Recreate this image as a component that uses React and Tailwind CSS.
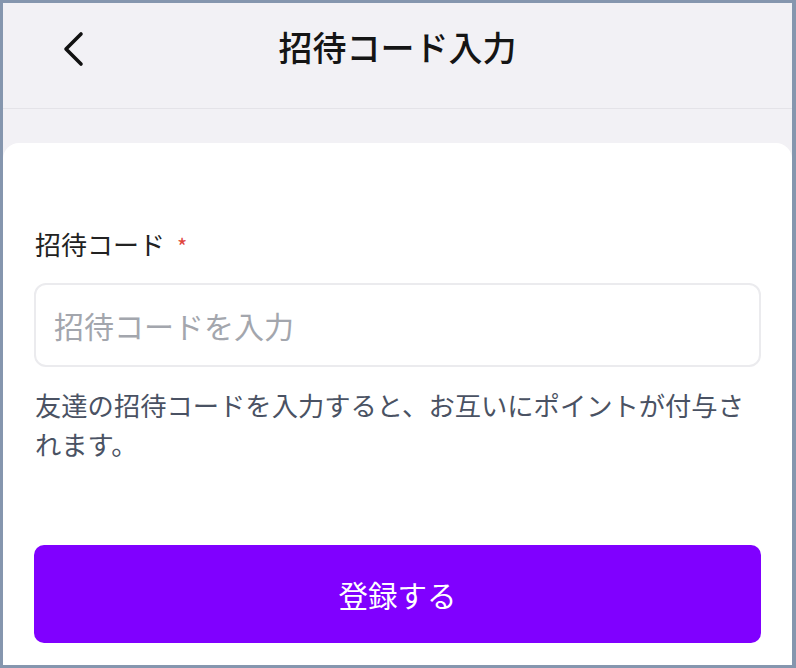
export default function App() {
  const font = { fontFamily: '"Noto Sans CJK JP", "Noto Sans", sans-serif' };
  return (
    <div
      className="w-[796px] h-[668px] border-l-[3px] border-t-[3px] border-r-4 border-b-[3px] border-[#8596ae] bg-[#f2f1f5] flex flex-col overflow-hidden"
      style={font}
    >
      <header className="h-[106px] shrink-0 border-b border-[#e4e3e8]">
        <div className="h-[86px] relative flex items-center justify-center">
          <button className="absolute left-[56px] top-[26px] w-[30px] h-[40px] flex items-center justify-center">
            <svg width="24" height="36" viewBox="0 0 24 36" fill="none">
              <polyline
                points="19,3 4,18 19,33"
                stroke="#111"
                strokeWidth="3.6"
                strokeLinecap="round"
                strokeLinejoin="round"
              />
            </svg>
          </button>
          <h1 className="text-[34px] font-medium text-[#151515]">招待コード入力</h1>
        </div>
      </header>

      <main className="mt-[34px] flex-1 bg-white rounded-t-[16px] px-[31px] pt-[83px]">
        <label className="block text-[26px] leading-[36px] text-[#222] pl-[1px]">
          招待コード<span className="text-[#e0453c] ml-[12px] text-[22px]">*</span>
        </label>
        <input
          className="mt-[20px] w-full h-[84px] rounded-[12px] border-2 border-[#ebebee] px-[18px] text-[30px] text-[#222] placeholder:text-[#a3a6ad] outline-none"
          placeholder="招待コードを入力"
          style={font}
        />
        <p className="mt-[18px] text-[26.3px] leading-[39px] text-[#4a5263] pl-[1px] pr-[4px]">
          友達の招待コードを入力すると、お互いにポイントが付与されます。
        </p>
        <button
          className="mt-[82px] w-full h-[98px] rounded-[10px] bg-[#8000ff] text-white text-[29.5px]"
          style={font}
        >
          登録する
        </button>
      </main>
    </div>
  );
}
